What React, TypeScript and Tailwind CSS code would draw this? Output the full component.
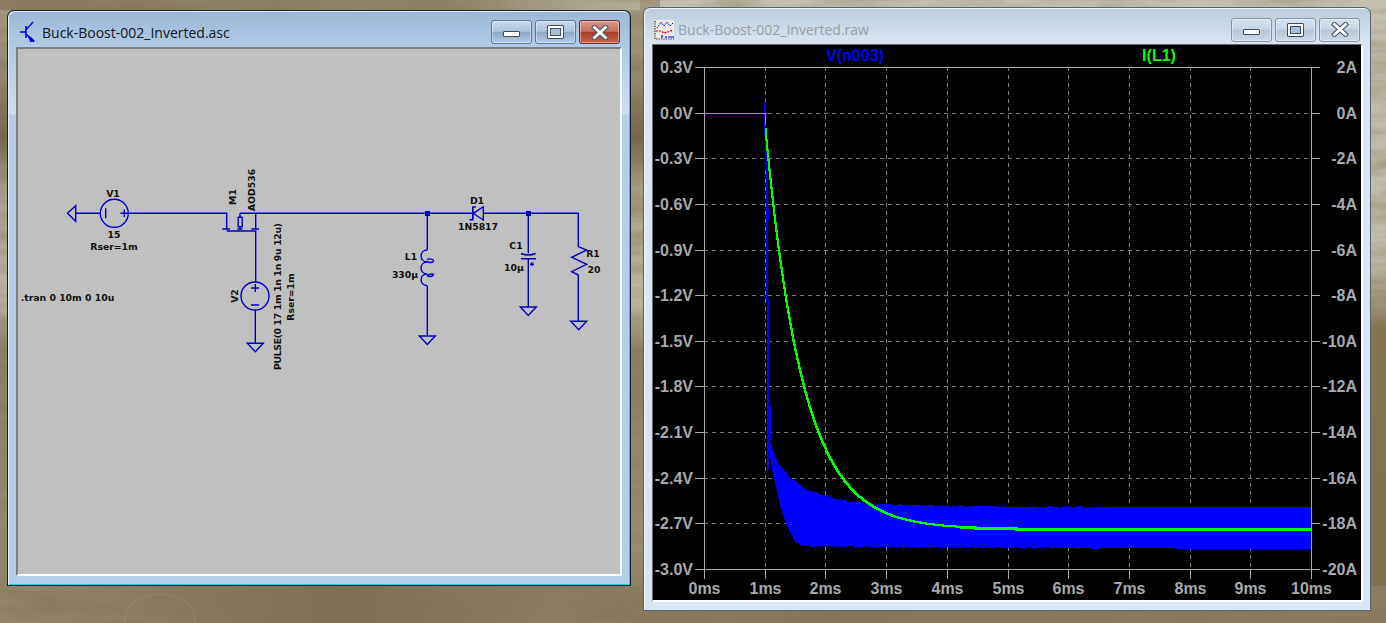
import type { ReactNode } from 'react';

const WIRE = '#0000c4';

// piecewise-linear lookup for the blue trace envelopes
function lerp(points: number[][], x: number) {
  for (let i = 1; i < points.length; i++) {
    if (x <= points[i][0]) {
      const [x0, y0] = points[i - 1];
      const [x1, y1] = points[i];
      return y0 + ((y1 - y0) * (x - x0)) / (x1 - x0);
    }
  }
  return points[points.length - 1][1];
}

const UPPER = [[768, 420], [769, 440], [777, 462], [790, 478], [807, 490], [840, 500], [867, 504], [953, 506], [1040, 507], [1311, 507]];
const LOWER = [[768, 430], [769, 453], [773, 477], [780, 507], [788, 530], [795, 542], [805, 546], [857, 547], [1040, 548], [1311, 549]];

function jitter(x: number) {
  return Math.round(Math.sin(x * 12.9898) * 43758.5453) % 2;
}

function bluePath() {
  let top = 'M768 420';
  let bottom = '';
  for (let x = 768; x <= 1311; x++) {
    const noisy = x < 1100 ? jitter(x) * 0.6 : 0;
    top += `H${x}V${Math.round(lerp(UPPER, x) + noisy)}`;
  }
  for (let x = 1311; x >= 768; x--) {
    const noisy = x < 1100 ? jitter(x + 7) * 0.6 : 0;
    bottom += `V${Math.round(lerp(LOWER, x) + noisy)}H${x}`;
  }
  return `${top}H1311${bottom}Z`;
}

function greenPath(from: number, to: number) {
  let d = '';
  for (let x = from; x <= to; x++) {
    const y = Math.round(529 - 416 * Math.exp(-((x - 763.5) / 60.7) / 0.617));
    d += d ? `H${x}V${y}` : `M${x} ${y}`;
  }
  return d;
}

const V_LABELS = ['0.3V', '0.0V', '-0.3V', '-0.6V', '-0.9V', '-1.2V', '-1.5V', '-1.8V', '-2.1V', '-2.4V', '-2.7V', '-3.0V'];
const A_LABELS = ['2A', '0A', '-2A', '-4A', '-6A', '-8A', '-10A', '-12A', '-14A', '-16A', '-18A', '-20A'];
const MS_LABELS = ['0ms', '1ms', '2ms', '3ms', '4ms', '5ms', '6ms', '7ms', '8ms', '9ms', '10ms'];

function Plot() {
  const rowY = (i: number) => Math.round(67 + i * 45.64) + 0.5;
  const colX = (i: number) => Math.round(704 + i * 60.7) + 0.5;
  const label = "font-['Liberation_Sans',sans-serif] font-bold text-[16px] fill-[#a6a9ad]";
  return (
    <svg viewBox="653 45 708 555" className="block h-full w-full">
      {V_LABELS.map((_, i) => {
        const solid = i === 0 || i === 11;
        return (
          <g key={i} shapeRendering="crispEdges">
            <path d={`M695 ${rowY(i)}H704M1311 ${rowY(i)}H1320`} stroke="#a8a8a8" />
            <line x1={704} x2={1311} y1={rowY(i)} y2={rowY(i)} stroke={solid ? '#a8a8a8' : '#7c7c7c'} strokeDasharray={solid ? undefined : '4 4'} />
          </g>
        );
      })}
      {MS_LABELS.map((_, i) => {
        const solid = i === 0 || i === 10;
        return (
          <g key={i} shapeRendering="crispEdges">
            <line x1={colX(i)} x2={colX(i)} y1={67} y2={570} stroke={solid ? '#a8a8a8' : '#7c7c7c'} strokeDasharray={solid ? undefined : '4 4'} />
            <line x1={colX(i)} x2={colX(i)} y1={570} y2={579} stroke="#a8a8a8" />
          </g>
        );
      })}
      <g shapeRendering="crispEdges">
        <path d={bluePath()} fill="#0000ff" />
        <path d="M765 102V134H766V170H767V300H768V470" stroke="#0000ff" strokeWidth={1.5} fill="none" />
        <path d="M767 209V220M768 337V360M769 406V440" stroke="#0000ff" strokeWidth={3} fill="none" />
        <path d="M704 113.5H765V125" stroke="#00ff00" fill="none" />
        <path d={greenPath(765, 880)} stroke="#00ff00" strokeWidth={1.1} fill="none" />
        <path d={greenPath(880, 960)} stroke="#00ff00" strokeWidth={2} fill="none" />
        <path d={greenPath(960, 1311)} stroke="#00ff00" strokeWidth={3} fill="none" />
      </g>
      {V_LABELS.map((t, i) => (
        <text key={t} x={693} y={rowY(i) + 5} textAnchor="end" className={label}>{t}</text>
      ))}
      {A_LABELS.map((t, i) => (
        <text key={t} x={1357} y={rowY(i) + 5} textAnchor="end" className={label}>{t}</text>
      ))}
      {MS_LABELS.map((t, i) => (
        <text key={t} x={colX(i)} y={594} textAnchor="middle" className={label}>{t}</text>
      ))}
      <text x={855} y={61} textAnchor="middle" className="font-['Liberation_Sans',sans-serif] font-bold text-[16px] fill-[#0000ff]">V(n003)</text>
      <text x={1159} y={61} textAnchor="middle" className="font-['Liberation_Sans',sans-serif] font-bold text-[16px] fill-[#00ff00]">I(L1)</text>
    </svg>
  );
}

function Label({ x, y, up, fit, children }: { x: number; y: number; up?: boolean; fit?: number; children: string }) {
  return (
    <text
      x={x}
      y={y}
      textAnchor="middle"
      textLength={fit}
      transform={up ? `rotate(-90 ${x} ${y})` : undefined}
      className="font-['DejaVu_Sans',sans-serif] font-bold text-[9.3px] fill-[#101010]"
    >
      {children}
    </text>
  );
}

function Ground({ x, y }: { x: number; y: number }) {
  return <path d={`M${x - 8} ${y}H${x + 8}L${x} ${y + 8.5}Z`} fill="none" />;
}

function Schematic() {
  return (
    <svg viewBox="18 49 602 525" className="block h-full w-full">
      <g stroke={WIRE} strokeWidth={1.4} fill="none">
        {/* V1 and its ground */}
        <path d="M67.5 213.3L75.7 205.7V221.3Z" />
        <path d="M75.7 213.3H100M128.5 213.3H226.7V229M222.3 229H230M237.3 229H242.5M251.3 229H259" />
        <circle cx={114.3} cy={213.3} r={14} />
        <path d="M105.7 208.3V218.3M120.5 213.3H128M124.3 209.5V217" />
        {/* M1 */}
        <path d="M226.7 231H255.7V282M240 213.3V217.3M240 226.7V229M255.7 213.3V229" />
        <rect x={238.2} y={217.3} width={4} height={9.4} />
        {/* V2 */}
        <circle cx={255} cy={296} r={14} />
        <path d="M251 288H259M255.3 284V292M251 305H259M255.3 310V343.3" />
        <Ground x={255.3} y={343.3} />
        {/* top rail */}
        <path d="M240 213.3H472.5M484 213.3H578.3V246.7" />
        {/* L1 */}
        <path d="M427.3 213.3V250M427.3 285.7V336" />
        <path d="M427.3 250C419 250 419 262 427.3 262C419 262 419 274 427.3 274C419 274 419 285.7 427.3 285.7" />
        <path d="M427 259.5C430 258 436 260 432.5 262C430 263 427 262 427 261M427 275.5C430 273.5 436 273.5 432.5 276C430 277 427 276 427 275.5" />
        <Ground x={427.3} y={336} />
        {/* D1 */}
        <path d="M473.3 213.3L483.3 206.7V220Z" />
        <path d="M476 207H472.7V219.8H469.5M472.7 207H472M473 207V219.8" />
        {/* C1 */}
        <path d="M528.3 213.3V253.5M521 253.5Q528.3 256.5 535.6 253.5M521 258.7H536M528.3 258.7V307M530 264.3H534M532 262.3V266.3" />
        <Ground x={528.3} y={307} />
        {/* R1 */}
        <path d="M578.3 246.7L586.7 250L571.7 257.3L586.7 264.3L571.7 271.7L578.3 275V321.3" />
        <Ground x={578.7} y={321.3} />
      </g>
      <g fill={WIRE}>
        <rect x={425} y={211} width={5} height={5} />
        <rect x={526} y={211} width={5} height={5} />
      </g>
      <Label x={113} y={197}>V1</Label>
      <Label x={114} y={238}>15</Label>
      <Label x={114} y={250}>Rser=1m</Label>
      <Label x={67.5} y={300.5}>.tran 0 10m 0 10u</Label>
      <Label x={236} y={197} up>M1</Label>
      <Label x={255} y={190} up>AOD536</Label>
      <Label x={238} y={296} up>V2</Label>
      <Label x={281} y={296.5} up fit={147}>PULSE(0 17 1m 1n 1n 9u 12u)</Label>
      <Label x={294} y={297} up>Rser=1m</Label>
      <Label x={477} y={204}>D1</Label>
      <Label x={478} y={230}>1N5817</Label>
      <Label x={411} y={260}>L1</Label>
      <Label x={405} y={278}>330µ</Label>
      <Label x={516} y={249}>C1</Label>
      <Label x={514} y={271}>10µ</Label>
      <Label x={593} y={257}>R1</Label>
      <Label x={594} y={273}>20</Label>
    </svg>
  );
}

function TransistorIcon() {
  return (
    <svg viewBox="0 0 16 22" className="h-[22px] w-[16px]" fill="none" stroke="#0000e0" strokeWidth={1.2}>
      <path d="M0 11H6M6 5V17" strokeWidth={1.6} />
      <path d="M6 9L13 1M6 13L14 21" />
      <path d="M9 15.5L13 19.5L11 20Z" fill="#0000e0" strokeWidth={2} />
    </svg>
  );
}

function PlotIcon() {
  return (
    <svg viewBox="0 0 20 20" className="h-[20px] w-[20px]" fill="none">
      <rect width={20} height={20} fill="#ece9e4" />
      <path d="M1 1V19H20" stroke="#111" strokeWidth={1.2} strokeDasharray="1.2 1.2" />
      <path d="M3 8L7 2L10 6L13 2L16 6L19 3" stroke="#0000e0" strokeWidth={1} strokeDasharray="1.5 1" />
      <path d="M2 11L7 11L10 13L14 12L19 10" stroke="#e00000" strokeWidth={1.2} strokeDasharray="2 1" />
      <path d="M8 18V15M12 18V16M14 17H20" stroke="#0000e0" strokeWidth={1.2} />
    </svg>
  );
}

function CaptionButton({ kind, active }: { kind: 'min' | 'max' | 'close'; active: boolean }) {
  const face =
    kind === 'close' && active
      ? 'border-[#6b2a24] bg-[linear-gradient(to_bottom,#d69a8e_0%,#c4705f_47%,#a93a2a_50%,#c5654c_100%)]'
      : active
        ? 'border-[#5b7896] bg-[linear-gradient(to_bottom,#c6d7ea_0%,#adc4de_47%,#8ba7c6_50%,#b4cbe4_100%)]'
        : 'border-[#84939f] bg-[linear-gradient(to_bottom,#d7e2ee_0%,#c6d5e4_47%,#b4c5d6_50%,#cddbe9_100%)]';
  return (
    <div className={`flex h-[24px] w-[41px] items-center justify-center rounded-[3px] border shadow-[inset_0_0_0_1px_#ffffff66] ${face}`}>
      {kind === 'min' && <div className="mt-[4px] h-[6px] w-[17px] rounded-[1px] border border-[#3d4c5c] bg-white" />}
      {kind === 'max' && (
        <div className="h-[14px] w-[17px] rounded-[1px] border border-[#3d4c5c] bg-white p-[2px]">
          <div className="h-full w-full border border-[#3d4c5c] bg-[#a9c0da]" />
        </div>
      )}
      {kind === 'close' && (
        <svg viewBox="0 0 18 15" className="h-[15px] w-[18px]" fill="none" strokeLinecap="square">
          <path d="M3.5 2.5L14.5 12.5M14.5 2.5L3.5 12.5" stroke="#45505c" strokeWidth={5} />
          <path d="M3.5 2.5L14.5 12.5M14.5 2.5L3.5 12.5" stroke="#ffffff" strokeWidth={3} />
        </svg>
      )}
    </div>
  );
}

function Window({
  frame,
  bar,
  active,
  icon,
  title,
  client,
  children,
}: {
  frame: string;
  bar: string;
  active: boolean;
  icon: ReactNode;
  title: string;
  client: string;
  children: ReactNode;
}) {
  return (
    <div className={`absolute flex flex-col rounded-t-[7px] border ${frame}`}>
      <div className={`flex h-[36px] items-center ${bar}`}>
        {icon}
        <span className={`flex-1 font-['Open_Sans',sans-serif] text-[14px] ${active ? 'text-[#101418]' : 'text-[#9a9fa5]'}`}>
          {title}
        </span>
        <div className="flex gap-[3px]">
          <CaptionButton kind="min" active={active} />
          <CaptionButton kind="max" active={active} />
          <CaptionButton kind="close" active={active} />
        </div>
      </div>
      <div className={client}>{children}</div>
    </div>
  );
}

function Wallpaper() {
  return (
    <svg className="absolute inset-0 h-full w-full" viewBox="0 0 1386 623" preserveAspectRatio="none">
      <defs>
        <linearGradient id="left" x1="0" y1="0" x2="0" y2="1">
          <stop offset="0" stopColor="#a59b85" />
          <stop offset="0.1" stopColor="#9a8f78" />
          <stop offset="0.22" stopColor="#75664c" />
          <stop offset="0.3" stopColor="#a89f8b" />
          <stop offset="0.48" stopColor="#bcb6a4" />
          <stop offset="0.56" stopColor="#8d8168" />
          <stop offset="0.88" stopColor="#988c74" />
          <stop offset="1" stopColor="#86775a" />
        </linearGradient>
        <linearGradient id="right" x1="0" y1="0" x2="0" y2="1">
          <stop offset="0" stopColor="#c4c0b0" />
          <stop offset="0.44" stopColor="#bfbaa9" />
          <stop offset="0.47" stopColor="#a89f88" />
          <stop offset="0.53" stopColor="#85744f" />
          <stop offset="1" stopColor="#807050" />
        </linearGradient>
        <linearGradient id="bottom" x1="0" y1="0" x2="1" y2="0">
          <stop offset="0" stopColor="#93866a" />
          <stop offset="0.25" stopColor="#7f7052" />
          <stop offset="0.4" stopColor="#8a7d62" />
          <stop offset="0.6" stopColor="#857759" />
          <stop offset="1" stopColor="#8b7d5f" />
        </linearGradient>
        <linearGradient id="top" x1="0" y1="0" x2="1" y2="0">
          <stop offset="0" stopColor="#8b7e63" />
          <stop offset="0.7" stopColor="#8f8369" />
          <stop offset="1" stopColor="#b8b29f" />
        </linearGradient>
        <filter id="grain" x="0" y="0" width="100%" height="100%">
          <feTurbulence type="fractalNoise" baseFrequency="0.012 0.07" numOctaves={4} seed={8} />
          <feColorMatrix values="0 0 0 0 0.22  0 0 0 0 0.17  0 0 0 0 0.08  1.6 0 0 0 -0.55" />
        </filter>
      </defs>
      <rect width={660} height={623} fill="url(#left)" />
      <rect x={660} width={726} height={623} fill="url(#right)" />
      <rect y={586} width={1386} height={37} fill="url(#bottom)" />
      <rect y={0} width={640} height={10} fill="url(#top)" />
      <rect width={1386} height={623} filter="url(#grain)" opacity={0.55} />
      <ellipse cx={160} cy={618} rx={35} ry={24} fill="none" stroke="#a89c80" strokeWidth={1.5} opacity={0.25} />
    </svg>
  );
}

export default function App() {
  return (
    <div className="relative h-[623px] w-[1386px] overflow-hidden">
      <Wallpaper />
      <Window
        active
        frame="left-[7px] top-[10px] h-[576px] w-[624px] border-[#14202c] border-b-[#0a2a3a] bg-[linear-gradient(to_bottom,#9db7d4_0,#b3cbe7_37px,#cfdff0_103px,#b6cee9_104px)] pb-[9px] pl-[8px] pr-[8px] shadow-[inset_1px_1px_0_#e6eff8,inset_-1px_-1px_0_#35c3e4]"
        bar="pl-[4px] pr-[2px] pt-[6px] [&>svg]:mr-[6px]"
        icon={<TransistorIcon />}
        title="Buck-Boost-002_Inverted.asc"
        client="min-h-0 flex-1 border-2 border-[#7e7e7e] border-b-white border-r-white bg-[#c0c0c0]"
      >
        <Schematic />
      </Window>
      <Window
        active={false}
        frame="left-[643px] top-[7px] h-[604px] w-[728px] border-[#566270] bg-[linear-gradient(to_bottom,#bccddd_0,#dbe6f2_37px,#d8e5f2_100%)] pb-[8px] pl-[8px] pr-[7px] shadow-[inset_1px_1px_0_#f0f5fa]"
        bar="pl-[2px] pr-[3px] pt-[7px] [&>svg]:mr-[4px]"
        icon={<PlotIcon />}
        title="Buck-Boost-002_Inverted.raw"
        client="min-h-0 flex-1 border-l border-t border-[#6a6a6a] border-b-2 border-b-white border-r-2 border-r-white bg-black"
      >
        <Plot />
      </Window>
    </div>
  );
}
